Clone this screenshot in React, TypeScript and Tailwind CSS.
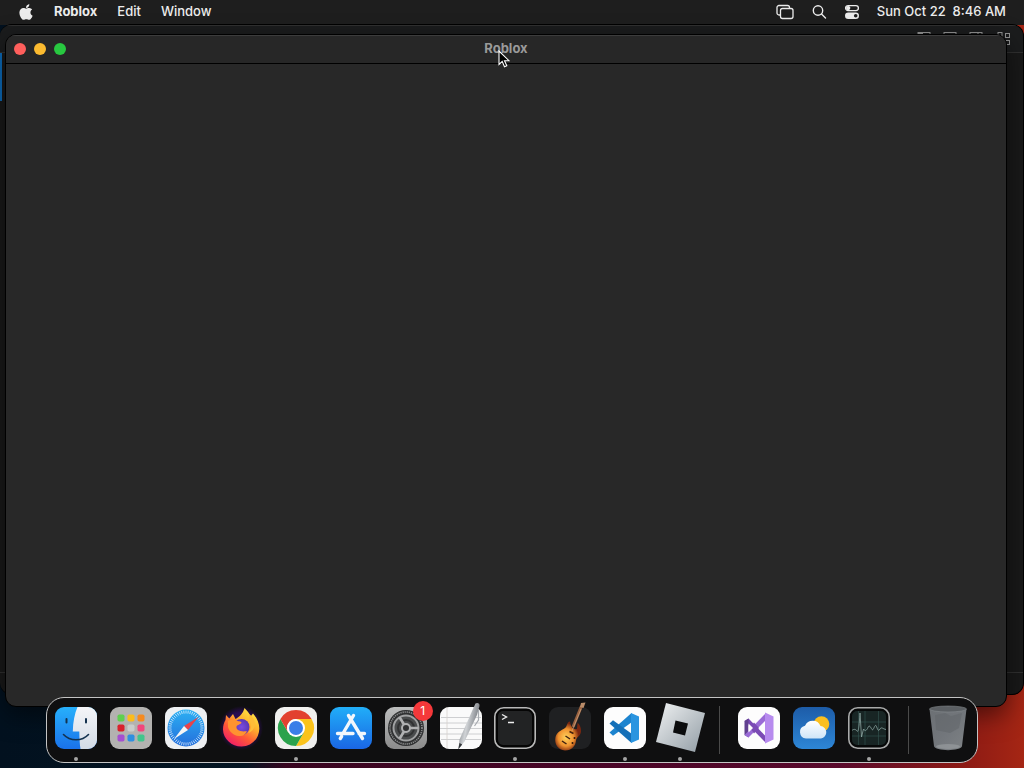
import type { ReactNode } from 'react';
import { FaApple } from 'react-icons/fa';

type DockApp = {
  name: string;
  icon: ReactNode;
  running?: boolean;
  badge?: number;
};

const menus = ['Edit', 'Window'];

const tiles = [
  '#5fd04f', '#fbbc1c', '#f58a1f',
  '#d9212c', '#c9ccca', '#f2467c',
  '#a54fd0', '#2f8fe0', '#41c58c',
];

const ticks = Array.from({ length: 48 }, (_, i) => i * 7.5);

const Icon = ({ children }: { children: ReactNode }) => (
  <svg viewBox="0 0 42 42" className="block size-[42px] overflow-visible" aria-hidden="true">
    {children}
  </svg>
);

const FinderIcon = () => (
  <Icon>
    <defs>
      <linearGradient id="finder-l" x2="0" y2="1">
        <stop stopColor="#27b0fb" />
        <stop offset="1" stopColor="#1a72ea" />
      </linearGradient>
      <linearGradient id="finder-r" x2="0" y2="1">
        <stop stopColor="#f4f5f8" />
        <stop offset="1" stopColor="#d3dbe6" />
      </linearGradient>
    </defs>
    <rect width="42" height="42" rx="9" fill="url(#finder-l)" />
    <path d="M22.500 0H33a9 9 0 0 1 9 9v24a9 9 0 0 1-9 9h-7.500C24.800 38 24.400 31 24.300 24.500h-6.500C18 15 19.600 6.500 22.500 0z" fill="url(#finder-r)" />
    <path d="M11.500 12v3.500M31 12v3.500" stroke="#14324f" strokeWidth="2" strokeLinecap="round" />
    <path d="M8.500 27.500c6.500 7 18.500 7 25 0" fill="none" stroke="#14324f" strokeWidth="1.600" strokeLinecap="round" />
  </Icon>
);

const LaunchpadIcon = () => (
  <Icon>
    <rect width="42" height="42" rx="9" fill="#b3b2b0" />
    {tiles.map((color, i) => (
      <rect key={color} x={7.5 + (i % 3) * 10} y={7.5 + Math.floor(i / 3) * 10} width="7" height="7" rx="1.800" fill={color} />
    ))}
  </Icon>
);

const SafariIcon = () => (
  <Icon>
    <defs>
      <linearGradient id="safari" x2="0" y2="1">
        <stop stopColor="#2cb0f3" />
        <stop offset="1" stopColor="#246fdc" />
      </linearGradient>
    </defs>
    <rect width="42" height="42" rx="9" fill="#eef0f2" />
    <circle cx="21" cy="21" r="18.500" fill="url(#safari)" />
    {ticks.map((a) => (
      <path key={a} d="M21 3.500v3" stroke="#e6f3fd" strokeWidth=".7" transform={`rotate(${a} 21 21)`} />
    ))}
    <path d="M33.500 10 19 19l4 4z" fill="#e8434a" />
    <path d="M9 32l10-13 4 4z" fill="#f5f5f5" />
  </Icon>
);

const FirefoxIcon = () => (
  <Icon>
    <defs>
      <linearGradient id="ff-body" x1=".85" y1="0" x2=".2" y2="1">
        <stop stopColor="#fff04a" />
        <stop offset=".35" stopColor="#ffb52e" />
        <stop offset=".65" stopColor="#ff5a36" />
        <stop offset="1" stopColor="#f0156e" />
      </linearGradient>
      <radialGradient id="ff-globe">
        <stop stopColor="#7a4be0" />
        <stop offset="1" stopColor="#5a37b5" />
      </radialGradient>
      <radialGradient id="ff-halo">
        <stop offset=".7" stopColor="#2a0d52" />
        <stop offset="1" stopColor="#2a0d52" stopOpacity="0" />
      </radialGradient>
    </defs>
    <circle cx="21" cy="21" r="22" fill="url(#ff-halo)" />
    <path d="M24.500 1c3 3 5 5.500 6 8.500l2.500-3c4 4.500 6.500 9.500 6.300 15.500C39 32 31.300 39.500 21.500 39.500S3.200 32 3 22.500c0-4 1-7 2.500-9.500l.5-5 3.300 3.500L13 7l2.500 5C19 10 23 7 24.500 1z" fill="url(#ff-body)" />
    <circle cx="21.500" cy="20" r="8" fill="url(#ff-globe)" />
    <path d="M8 14c3-2 6-2 8-.5 2 1 5 .5 5.500 2-.5 2-4 2-5 4-.5 2 1 3.500 4 4.500 3 .8 5 0 6.500.5-1.500 3-4.500 5-8 4.500-6-.5-10-5-11-9z" fill="#ff9330" />
    <path d="M29 12c3 4 3 10-1 14 4-1 7-5 7-9s-3-8-6-10c0 2 .5 3 0 5z" fill="#ffbd38" />
  </Icon>
);

const ChromeIcon = () => (
  <Icon>
    <rect width="42" height="42" rx="9" fill="#f0f0ee" />
    <path d="M21 12h15.600A18 18 0 0 1 21 39l7.800-13.500z" fill="#fbc31b" />
    <path d="M13.200 25.500 5.400 12A18 18 0 0 0 21 39l7.800-13.500z" fill="#2ba24c" />
    <path d="M5.400 12a18 18 0 0 1 31.200 0H21a9 9 0 0 0-7.800 13.500z" fill="#e2412f" />
    <circle cx="21" cy="21" r="9" fill="#fff" />
    <circle cx="21" cy="21" r="7" fill="#3a7ee8" />
  </Icon>
);

const AppStoreIcon = () => (
  <Icon>
    <defs>
      <linearGradient id="store" x2="0" y2="1">
        <stop stopColor="#21aef8" />
        <stop offset="1" stopColor="#1a66e4" />
      </linearGradient>
    </defs>
    <rect width="42" height="42" rx="9" fill="url(#store)" />
    <path d="M23.500 8.500 13.200 26M18.500 8.500l14 23M7.500 26.500h15.500M29 26.500h5.500M11.600 29.500l-1.300 2" fill="none" stroke="#f2f7fc" strokeWidth="3.400" strokeLinecap="round" />
  </Icon>
);

const SettingsIcon = () => (
  <Icon>
    <defs>
      <linearGradient id="settings" x2="0" y2="1">
        <stop stopColor="#bcbdbd" />
        <stop offset="1" stopColor="#8b8b8b" />
      </linearGradient>
    </defs>
    <rect width="42" height="42" rx="9" fill="url(#settings)" />
    <circle cx="21" cy="21" r="18" fill="#2f3031" />
    <circle cx="21" cy="21" r="16" fill="none" stroke="#8d8e8f" strokeWidth="1.600" strokeDasharray="1.200 .9" />
    <circle cx="21" cy="21" r="12.500" fill="#4a4c4d" stroke="#a0a1a2" strokeWidth="2" />
    <circle cx="21" cy="21" r="8" fill="none" stroke="#303132" strokeWidth="2" />
    <circle cx="21" cy="21" r="4" fill="#303132" stroke="#b0b1b2" strokeWidth="2" />
    <path d="M25 21h8.500M19 17.500 14.700 10.500M19 24.500 14.700 31.500" stroke="#b0b1b2" strokeWidth="2.600" />
  </Icon>
);

const TextEditIcon = () => (
  <Icon>
    <defs>
      <linearGradient id="pen" x1="0" x2="1" y2=".4">
        <stop stopColor="#5c6066" />
        <stop offset=".5" stopColor="#d0d3d6" />
        <stop offset="1" stopColor="#6b6f75" />
      </linearGradient>
    </defs>
    <rect width="42" height="42" rx="9" fill="#fafafa" />
    <path d="M1 10.500h40M0 16h42M0 21.500h42M0 27h42M1 32.500h40" stroke="#c3c4c6" strokeWidth=".8" />
    <path d="M7 0v42" stroke="#d6d0cd" strokeWidth=".8" />
    <path d="M35.500-3.500c2-1.500 4.500 0 4 2.500L37 8 24.500 34.500 18.500 42l1-9.500L32.500 3z" fill="url(#pen)" />
    <path d="M38.500 3v10l-4 6" fill="none" stroke="#a7abb0" strokeWidth="1.200" />
    <path d="m19.500 36-1.300 6.500 4-5z" fill="#33363a" />
  </Icon>
);

const TerminalIcon = () => (
  <Icon>
    <rect x=".8" y=".8" width="40.400" height="40.400" rx="9" fill="#050505" stroke="#b9b9b9" strokeWidth="1.600" />
    <rect x="4" y="4" width="34" height="34" rx="5" fill="#222324" />
    <path d="m8 7.500 4.500 2.500L8 12.500M14 15.500h6" fill="none" stroke="#eee" strokeWidth="1.400" />
  </Icon>
);

const GarageBandIcon = () => (
  <Icon>
    <defs>
      <radialGradient id="guitar" cx=".42" cy=".55">
        <stop stopColor="#ffd25c" />
        <stop offset=".6" stopColor="#f0922f" />
        <stop offset="1" stopColor="#7a2710" />
      </radialGradient>
    </defs>
    <rect width="42" height="42" rx="9" fill="#1f2022" />
    <path d="M32.500-1 24 20" stroke="#9a6240" strokeWidth="3" />
    <path d="m31 0 1-4 4.500-.5-2 5.500z" fill="#b98c6a" />
    <path d="M21 14.500c-3 0-2.500 4.500-5 6.500-4 2.500-8 4-9.500 9C5 37 9 43 16 43.500c7 0 10.500-4.500 11-10 .5-4 5-4.500 5-9.500 0-4-1.500-7-3.500-8l-.5 6c-4 1-6.500-3-7-7.500z" fill="url(#guitar)" />
    <path d="m20.500 24.500 4 2M16.500 29l4.500 3M13 34l4.500 3" stroke="#40200f" strokeWidth="1.500" />
    <path d="m32 2-9 22" stroke="#d8b48f" strokeWidth=".6" />
    <circle cx="25.500" cy="31" r="1" fill="#2f1508" />
    <circle cx="23.500" cy="36" r="1" fill="#2f1508" />
  </Icon>
);

const VSCodeIcon = () => (
  <Icon>
    <rect width="42" height="42" rx="9" fill="#fdfdfd" />
    <path d="M27.500 6 5.500 25.500l3.500 3.300L28 15z" fill="#1d84cf" />
    <path d="M27.500 36 5.500 16.500 9 13.200 28 27z" fill="#1570b8" />
    <path d="M27 6 35 9.500v23L27 36z" fill="#2a95e0" />
  </Icon>
);

const RobloxIcon = () => (
  <Icon>
    <defs>
      <linearGradient id="roblox" x2="1" y2="1">
        <stop stopColor="#f0f2f3" />
        <stop offset="1" stopColor="#919ca4" />
      </linearGradient>
    </defs>
    <path d="M7-4 46 6 36 45-3 35z" fill="url(#roblox)" />
    <path d="M16.500 13.500 29 16.500 26 28.500 14 25.500z" fill="#0b0c0d" />
  </Icon>
);

const VisualStudioIcon = () => (
  <Icon>
    <rect width="42" height="42" rx="9" fill="#fdfdfd" />
    <path d="m6.500 14 4-2.500L28 29.500V36z" fill="#7b4bb5" />
    <path d="M6.500 14v14l4 2.500V11.500z" fill="#61408f" />
    <path d="M10.500 30.500 28 13V6L6.500 28z" fill="#9a6bd6" />
    <path d="m12 20.500 4-5 5 5.500-5 5.500z" fill="#7b4bb5" />
    <path d="m10.500 16.500 4.500 4.500-4.500 4.500z" fill="#fdfdfd" />
    <path d="m27 5.500 8.500 4v23l-8.500 4z" fill="#b78bee" />
    <path d="M27 15v12l-6-6z" fill="#fdfdfd" />
  </Icon>
);

const WeatherIcon = () => (
  <Icon>
    <defs>
      <linearGradient id="sky" x2="0" y2="1">
        <stop stopColor="#1d5ca8" />
        <stop offset="1" stopColor="#2d86d6" />
      </linearGradient>
      <linearGradient id="cloud" x2="0" y2="1">
        <stop stopColor="#fff" />
        <stop offset="1" stopColor="#cfe5f8" />
      </linearGradient>
    </defs>
    <rect width="42" height="42" rx="9" fill="url(#sky)" />
    <circle cx="28.500" cy="17" r="7.800" fill="#fbbf1f" />
    <path d="M13 31.500a6.500 6.500 0 0 1-1-12.800 8.500 8.500 0 0 1 15.500.3 6.300 6.300 0 0 1 .5 12.500z" fill="url(#cloud)" />
  </Icon>
);

const ActivityIcon = () => (
  <Icon>
    <rect x=".8" y=".8" width="40.400" height="40.400" rx="9" fill="#060808" stroke="#a9aaaa" strokeWidth="1.600" />
    <rect x="4" y="4" width="34" height="34" rx="5" fill="#182524" />
    <path d="M10.500 4v34M17 4v34M30.500 4v34M4 15h34M4 29h34" stroke="#345450" strokeWidth=".6" />
    <path d="M4 23.500c2-2 4-1 5 .5s2-1 3-18l1.500 24 2-8c2 3 3 1 4-.5 2-5 3-1 4.500 1s3-7 4.500-3 2 5 3.500 2.500 3 0 6 .5" fill="none" stroke="#8fa8a5" strokeWidth=".8" />
  </Icon>
);

const TrashIcon = () => (
  <Icon>
    <defs>
      <linearGradient id="trash" x2="1" y2="1">
        <stop stopColor="#6c7074" />
        <stop offset=".5" stopColor="#72767b" />
        <stop offset="1" stopColor="#7f8386" />
      </linearGradient>
    </defs>
    <path d="M2.500 2 7 39c.5 5.500 27.500 5.500 28 0l4.500-37z" fill="url(#trash)" />
    <ellipse cx="21" cy="2" rx="18.500" ry="3" fill="#5b5f63" stroke="#85898d" strokeWidth=".6" />
    <path d="m8 8 10-2 6 3 11-3-3 15-9 5-14-3z" fill="#5f6368" fillOpacity=".5" />
    <ellipse cx="21" cy="39.500" rx="12" ry="2.500" fill="#979b9e" fillOpacity=".7" />
  </Icon>
);

const apps: DockApp[] = [
  { name: 'Finder', icon: <FinderIcon />, running: true },
  { name: 'Launchpad', icon: <LaunchpadIcon /> },
  { name: 'Safari', icon: <SafariIcon /> },
  { name: 'Firefox', icon: <FirefoxIcon /> },
  { name: 'Chrome', icon: <ChromeIcon />, running: true },
  { name: 'App Store', icon: <AppStoreIcon /> },
  { name: 'System Settings', icon: <SettingsIcon />, badge: 1 },
  { name: 'TextEdit', icon: <TextEditIcon /> },
  { name: 'Terminal', icon: <TerminalIcon />, running: true },
  { name: 'GarageBand', icon: <GarageBandIcon /> },
  { name: 'Visual Studio Code', icon: <VSCodeIcon />, running: true },
  { name: 'Roblox', icon: <RobloxIcon />, running: true },
];

const recents: DockApp[] = [
  { name: 'Visual Studio', icon: <VisualStudioIcon /> },
  { name: 'Weather', icon: <WeatherIcon /> },
  { name: 'Activity Monitor', icon: <ActivityIcon />, running: true },
];

const DockItem = ({ app }: { app: DockApp }) => (
  <button aria-label={app.name} className="flex flex-1 flex-col items-center gap-2 pt-[9px]">
    <span className="relative">
      {app.icon}
      {app.badge && (
        <span className="absolute -top-1.5 -right-1.5 flex size-5 items-center justify-center rounded-full bg-[#f5383a] text-xs text-white">
          {app.badge}
        </span>
      )}
    </span>
    {app.running && <span className="size-1 rounded-full bg-[#a5a5a5]" />}
  </button>
);

const DockDivider = () => (
  <div className="flex w-6 justify-center py-2">
    <div className="w-px bg-[#4a4a4a]" />
  </div>
);

const Dock = () => (
  <nav
    aria-label="Dock"
    className="absolute inset-x-[46px] bottom-[5px] flex h-[66px] rounded-[18px] border border-[#c4c4c4] bg-[#0f0f10] px-0.5"
  >
    {apps.map((app) => (
      <DockItem key={app.name} app={app} />
    ))}
    <DockDivider />
    {recents.map((app) => (
      <DockItem key={app.name} app={app} />
    ))}
    <DockDivider />
    <DockItem app={{ name: 'Trash', icon: <TrashIcon /> }} />
  </nav>
);

const MenuBar = () => (
  <header className="flex h-[25px] items-center justify-between bg-[#1e1e1e] px-[18px] pb-0.5 text-[13px] text-[#ececec]">
    <div className="flex items-center gap-5">
      <button aria-label="Apple menu">
        <FaApple size={18} className="w-4" />
      </button>
      <button className="font-bold">Roblox</button>
      {menus.map((menu) => (
        <button key={menu} className="font-medium">
          {menu}
        </button>
      ))}
    </div>
    <div className="flex items-center gap-[17px]">
      <button aria-label="Screen mirroring">
        <svg width="18" height="16" viewBox="0 0 18 16" fill="none" stroke="currentColor" strokeWidth="1.300">
          <path d="M4 11H3a2 2 0 0 1-2-2V3.500a2 2 0 0 1 2-2h8.500a2 2 0 0 1 2 2V4" />
          <rect x="4.500" y="4.500" width="12.500" height="10" rx="2" />
        </svg>
      </button>
      <button aria-label="Spotlight">
        <svg width="16" height="16" viewBox="0 0 16 16" fill="none" stroke="currentColor" strokeWidth="1.400" strokeLinecap="round">
          <circle cx="7" cy="6.500" r="4.700" />
          <path d="m10.500 10 4 4" />
        </svg>
      </button>
      <button aria-label="Control Center">
        <svg width="16" height="16" viewBox="0 0 16 16" fill="none" stroke="currentColor" strokeWidth="1.300">
          <rect x="1.600" y="1.600" width="12.800" height="5" rx="2.500" />
          <circle cx="4.200" cy="4.100" r="1.500" fill="currentColor" />
          <rect x="1" y="8.500" width="14" height="6.500" rx="3.250" fill="currentColor" stroke="none" />
          <circle cx="11.700" cy="11.750" r="1.800" fill="#1e1e1e" stroke="none" />
        </svg>
      </button>
      <time className="font-medium whitespace-pre">Sun Oct 22  8:46 AM</time>
    </div>
  </header>
);

// Editor window that sits behind the active one
const BackWindow = () => (
  <div className="absolute inset-x-0 top-6 bottom-[73px] overflow-hidden rounded-xl border-y border-r border-black bg-[#191919]">
    <div className="flex h-7 justify-end border-t border-b border-t-[#303030] border-b-[#303030] bg-[#1b1c1d] pt-1.5 pr-3">
      <svg width="94" height="14" viewBox="0 0 94 14" fill="none" stroke="#929292" strokeWidth="1" aria-hidden="true">
        <rect x="1" y=".5" width="12" height="12" />
        <path d="M1 1.500h5" strokeWidth="2" />
        <rect x="27" y=".5" width="12" height="12" />
        <rect x="53" y=".5" width="12" height="12" />
        <path d="M61 .5v12" />
        <rect x="81" y=".5" width="4" height="4" />
        <rect x="88.500" y="1.500" width="4" height="4" />
        <rect x="88.500" y="8.500" width="4" height="4" />
      </svg>
    </div>
    <div className="h-12 w-0.5 bg-[#0c6ab8]" />
    <div className="absolute inset-x-0 bottom-0 h-[22px] border-t border-[#303030]" />
  </div>
);

const AppWindow = () => (
  <main className="absolute top-[34px] right-[17px] bottom-[61px] left-[5px] flex flex-col overflow-hidden rounded-[11px] border border-black bg-[#282828] shadow-[0_8px_24px_rgba(0,0,0,0.5)]">
    <div className="relative flex h-7 items-center justify-center border-t border-t-[#3c3c3c] bg-[#272727] pb-0.5">
      <div className="absolute left-2 flex gap-2">
        <button aria-label="Close" className="size-3 rounded-full bg-[#ff5f5c]" />
        <button aria-label="Minimize" className="size-3 rounded-full bg-[#fcbb30]" />
        <button aria-label="Zoom" className="size-3 rounded-full bg-[#28c840]" />
      </div>
      <h1 className="text-[13px] font-bold text-[#9a9a9a]">Roblox</h1>
      <svg width="12" height="18" viewBox="0 0 12 18" className="absolute top-3.5 left-1/2 -ml-2" aria-hidden="true">
        <path d="M1 1v13.500l3.200-3 2.300 5.300 2.300-1-2.300-5.100H11z" fill="#000" stroke="#fff" strokeWidth="1.100" />
      </svg>
    </div>
    <div className="flex-1 border-t border-black" />
  </main>
);

export default function App() {
  return (
    <div className="relative h-screen overflow-hidden bg-[linear-gradient(90deg,#02111f_0%,#031522_24%,#38041f_28%,#4a0527_60%,#5a0a2c_82%,#8c1a14_94%,#a52614_100%)] font-['Inter',sans-serif] select-none">
      <MenuBar />
      <BackWindow />
      <AppWindow />
      <Dock />
    </div>
  );
}
